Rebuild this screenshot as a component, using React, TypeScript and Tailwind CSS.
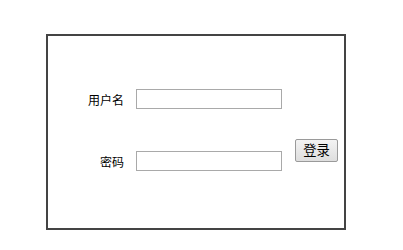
import React from "react";

export default function App() {
  return (
    <div
      className="w-[403px] h-[250px] bg-white pt-[34px] pl-[46px]"
      style={{ fontFamily: '"Liberation Sans", "Noto Sans CJK SC", sans-serif' }}
    >
      <div className="w-[300px] h-[196px] border-2 border-[#444444] flex items-start">
        <div className="flex flex-col pt-[53px]">
          <div className="flex items-center h-[20px]">
            <span className="w-[76px] pt-[3px] text-right text-[12px] leading-none text-black">用户名</span>
            <input
              type="text"
              className="ml-[12px] w-[146px] h-[20px] border border-[#a9a9a9] bg-white outline-none"
            />
          </div>
          <div className="flex items-center h-[20px] mt-[42px]">
            <span className="w-[76px] pt-[3px] text-right text-[12px] leading-none text-black">密码</span>
            <input
              type="password"
              className="ml-[12px] w-[146px] h-[20px] border border-[#a9a9a9] bg-white outline-none"
            />
          </div>
        </div>
        <button
          type="button"
          className="ml-[13px] mt-[103px] w-[43px] h-[23px] border border-[#9a9a9a] rounded-[2px] bg-gradient-to-b from-[#f3f3f3] to-[#dedede] text-[13.33px] leading-none text-black"
        >
          登录
        </button>
      </div>
    </div>
  );
}
